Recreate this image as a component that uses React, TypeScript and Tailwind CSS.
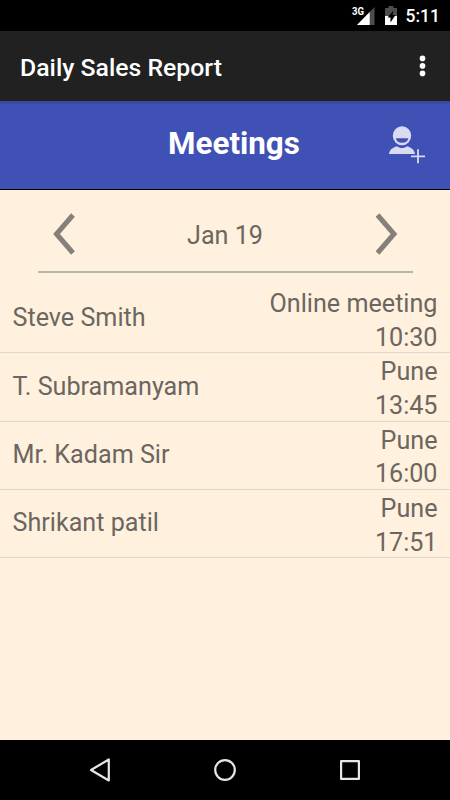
const meetings = [
  { name: "Steve Smith", place: "Online meeting", time: "10:30" },
  { name: "T. Subramanyam", place: "Pune", time: "13:45" },
  { name: "Mr. Kadam Sir", place: "Pune", time: "16:00" },
  { name: "Shrikant patil", place: "Pune", time: "17:51" },
]

function StatusBar() {
  return (
    <div className="flex h-[31px] justify-end bg-black pr-[10px] text-white">
      <svg width="60" height="31" viewBox="0 0 60 31" className="mr-[6px]">
        <text x="12" y="15" fontSize="10" fontWeight="700" fill="#fff" textLength="12" lengthAdjust="spacingAndGlyphs">3G</text>
        <path d="M34.500 7v18H17z" fill="#4d4d4d" />
        <path d="M29.700 12V25H17z" fill="#fff" />
        <path d="M48.500 6h5v2H57v17H45V8h3.500z" fill="#4d4d4d" />
        <path d="M45 16h12v9H45z" fill="#fff" />
        <path d="M53.500 10.500L47.500 17.500h3v5l5-7.500h-3z" fill="#000" />
      </svg>
      <span className="text-[17.500px] leading-[33px] font-medium">5:11</span>
    </div>
  )
}

function ActionBar() {
  return (
    <div className="flex h-[70px] items-center justify-between bg-[#212121] pr-[24px] pl-5">
      <h1 className="pt-1 text-[24.800px] leading-[34px] font-medium text-white">Daily Sales Report</h1>
      <svg width="7" height="22" viewBox="0 0 7 22" fill="#fff">
        <circle cx="3.5" cy="3.4" r="2.8" />
        <circle cx="3.5" cy="10.9" r="2.8" />
        <circle cx="3.5" cy="18.4" r="2.8" />
      </svg>
    </div>
  )
}

function AddPersonIcon() {
  return (
    <svg width="38" height="40" viewBox="0 0 38 40">
      <path d="M1 28c.6-4.300 3.500-6.500 8-7.800 2.600 2.400 7.400 2.400 10 0 4.500 1.300 7.400 3.500 8 7.800z" fill="#d9dcf0" />
      <ellipse cx="14" cy="10.300" rx="10" ry="11" fill="#3f51b5" />
      <ellipse cx="14" cy="9.800" rx="9.200" ry="9.500" fill="#d9dcf0" />
      <path d="M7.800 12.300h12.600c-.6 3-3.100 4.500-6.300 4.500s-5.700-1.500-6.300-4.500z" fill="#3f51b5" />
      <path d="M30 23.300v14M23 30.300h14" stroke="#3f51b5" strokeWidth="3" />
      <path d="M30 23.300v14M23 30.300h14" stroke="#d9dcf0" strokeWidth="1.800" />
    </svg>
  )
}

function MeetingsHeader() {
  return (
    <div className="grid h-[89px] grid-cols-[1fr_auto_1fr] border-b border-black bg-[#3f51b5] bg-linear-to-b from-[#35459a] to-[#3f51b5] to-[4px] pl-[18px]">
      <h2 className="col-start-2 pt-[23px] text-[31.350px] leading-[40px] font-bold text-white">Meetings</h2>
      <div className="flex justify-end pt-[25px] pr-6">
        <AddPersonIcon />
      </div>
    </div>
  )
}

function DatePicker() {
  return (
    <div className="mx-[37.500px] flex h-[83px] items-center justify-between border-b-2 border-[#b5b9ad] px-[14px] pt-[7px]">
      <svg width="24" height="42" viewBox="0 0 24 42" fill="none" stroke="#85807a" strokeWidth="5">
        <path d="M21 2L4.500 21 21 40" />
      </svg>
      <span className="pt-[3px]">Jan 19</span>
      <svg width="24" height="42" viewBox="0 0 24 42" fill="none" stroke="#85807a" strokeWidth="5">
        <path d="M2.500 2L19 21 2.500 40" />
      </svg>
    </div>
  )
}

function NavBar() {
  return (
    <div className="flex h-[60px] items-center justify-between bg-black px-[88px]">
      <svg width="24" height="26" viewBox="0 0 24 26" fill="none" stroke="#e6e6e6" strokeWidth="2.200" strokeLinejoin="round">
        <path d="M20.800 2.500v21L3 13z" />
      </svg>
      <svg width="24" height="24" viewBox="0 0 24 24" fill="none" stroke="#e6e6e6" strokeWidth="2.200">
        <circle cx="12" cy="12" r="9.800" />
      </svg>
      <svg width="24" height="24" viewBox="0 0 24 24" fill="none" stroke="#e6e6e6" strokeWidth="2.200" strokeLinejoin="round">
        <path d="M3.100 3.100h17.800v17.800H3.100z" />
      </svg>
    </div>
  )
}

export default function App() {
  return (
    <div className="flex h-[800px] w-[450px] flex-col overflow-hidden bg-[#fff1de] font-[Roboto,sans-serif] text-[25.150px] text-[#6b6660]">
      <StatusBar />
      <ActionBar />
      <MeetingsHeader />
      <DatePicker />
      <ul className="mt-[12px] flex-1">
        {meetings.map((m) => (
          <li key={m.name} className="flex h-[68.300px] items-center justify-between border-b border-[#dfd7c9] px-[12.500px] leading-[33.600px]">
            <span className="pb-[1px]">{m.name}</span>
            <div className="pt-[4px] text-right">
              <p>{m.place}</p>
              <p>{m.time}</p>
            </div>
          </li>
        ))}
      </ul>
      <NavBar />
    </div>
  )
}
